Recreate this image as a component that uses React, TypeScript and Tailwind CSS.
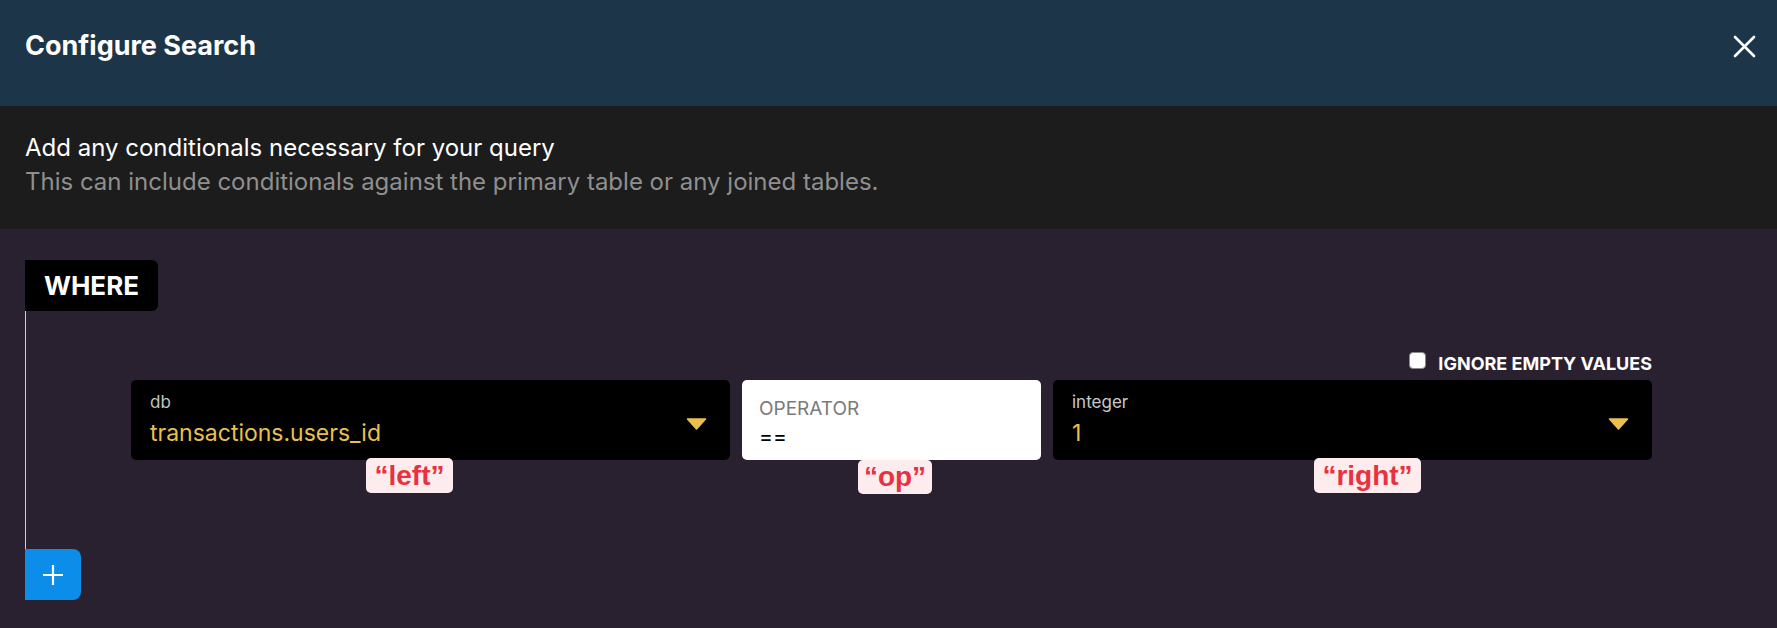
import { useState } from 'react';

function Caret({ className }: { className?: string }) {
  return (
    <svg width="21" height="12" viewBox="0 0 21 12" className={className}>
      <path d="M1.5 1 H19.5 L10.5 11 Z" fill="#e9c04f" stroke="#e9c04f" strokeWidth="1.5" strokeLinejoin="round" />
    </svg>
  );
}

function Tag({ text, className }: { text: string; className: string }) {
  return (
    <div
      className={`absolute flex items-center justify-center rounded-[5px] bg-[#fdecee] text-[#e8323f] font-bold text-[28px] leading-[28px] font-['Liberation_Sans',sans-serif] ${className}`}
    >
      {text}
    </div>
  );
}

export default function App() {
  const [ignoreEmpty, setIgnoreEmpty] = useState(false);

  return (
    <div className="relative w-[1777px] h-[628px] overflow-hidden bg-[#2a2130] font-['Inter',sans-serif]">
      {/* Header */}
      <div className="h-[106px] bg-[#1d3548] flex items-center justify-between pl-[25px] pr-[21px] pb-[13px]">
        <h1 className="text-white text-[27px] font-bold">Configure Search</h1>
        <button className="w-[23px] h-[23px] flex items-center justify-center">
          <svg width="23" height="23" viewBox="0 0 23 23">
            <path d="M2 2 L21 21 M21 2 L2 21" stroke="white" strokeWidth="2.6" strokeLinecap="round" />
          </svg>
        </button>
      </div>

      {/* Description */}
      <div className="h-[123px] bg-[#1c1c1c] px-[25px] pt-[25px]">
        <p className="text-white text-[24px] leading-[34px]">Add any conditionals necessary for your query</p>
        <p className="text-[#8f8f8f] text-[24px] leading-[34px]">
          This can include conditionals against the primary table or any joined tables.
        </p>
      </div>

      {/* Conditions */}
      <div className="pl-[25px] pt-[31px]">
        <div className="flex h-[51px] w-[133px] items-center justify-center bg-black text-white text-[26px] font-bold rounded-r-[6px]">
          WHERE
        </div>

        <div className="border-l border-[#cfcfcf] h-[238px] pl-[105px] pt-[41px]">
          <div className="w-[1521px]">
            <div className="flex justify-end items-start h-[22px] mb-[6px]">
              <label className="flex items-start gap-[12px] cursor-pointer">
                <input
                  type="checkbox"
                  checked={ignoreEmpty}
                  onChange={(e) => setIgnoreEmpty(e.target.checked)}
                  className="appearance-none w-[17px] h-[17px] rounded-[4px] bg-white border border-[#8a8a8a]"
                />
                <span className="text-white text-[18px] font-bold leading-[22px] mt-[1px]">IGNORE EMPTY VALUES</span>
              </label>
            </div>

            <div className="flex items-stretch h-[80px] gap-[12px]">
              <div className="w-[599px] bg-black rounded-[5px] flex items-center pl-[19px] pr-[23px]">
                <div className="flex-1 self-start pt-[12px]">
                  <div className="text-[#c4c4c4] text-[17px] leading-[20px]">db</div>
                  <div className="text-[#e9c04f] text-[23px] leading-[30px] mt-[6px]">transactions.users_id</div>
                </div>
                <Caret className="mt-[7px]" />
              </div>

              <div className="w-[299px] bg-white rounded-[5px] pl-[17px] pt-[18px]">
                <div className="text-[#7a7a7a] text-[19px] leading-[22px]">OPERATOR</div>
                <div className="text-black text-[21px] leading-[24px] mt-[5px]">==</div>
              </div>

              <div className="flex-1 bg-black rounded-[5px] flex items-center pl-[19px] pr-[23px]">
                <div className="flex-1 self-start pt-[12px]">
                  <div className="text-[#c8c8c8] text-[17px] leading-[20px]">integer</div>
                  <div className="text-[#e9c04f] text-[23px] leading-[30px] mt-[6px]">1</div>
                </div>
                <Caret className="mt-[7px]" />
              </div>
            </div>
          </div>
        </div>

        <button className="w-[56px] h-[51px] bg-[#0b8de9] rounded-r-[8px] flex items-center justify-center">
          <svg width="20" height="20" viewBox="0 0 20 20">
            <path d="M10 0 V20 M0 10 H20" stroke="white" strokeWidth="2.2" />
          </svg>
        </button>
      </div>

      {/* Annotations */}
      <Tag text="“left”" className="left-[366px] top-[458px] w-[87px] h-[35px]" />
      <Tag text="“op”" className="left-[858px] top-[460px] w-[74px] h-[34px]" />
      <Tag text="“right”" className="left-[1314px] top-[458px] w-[107px] h-[35px]" />
    </div>
  );
}
